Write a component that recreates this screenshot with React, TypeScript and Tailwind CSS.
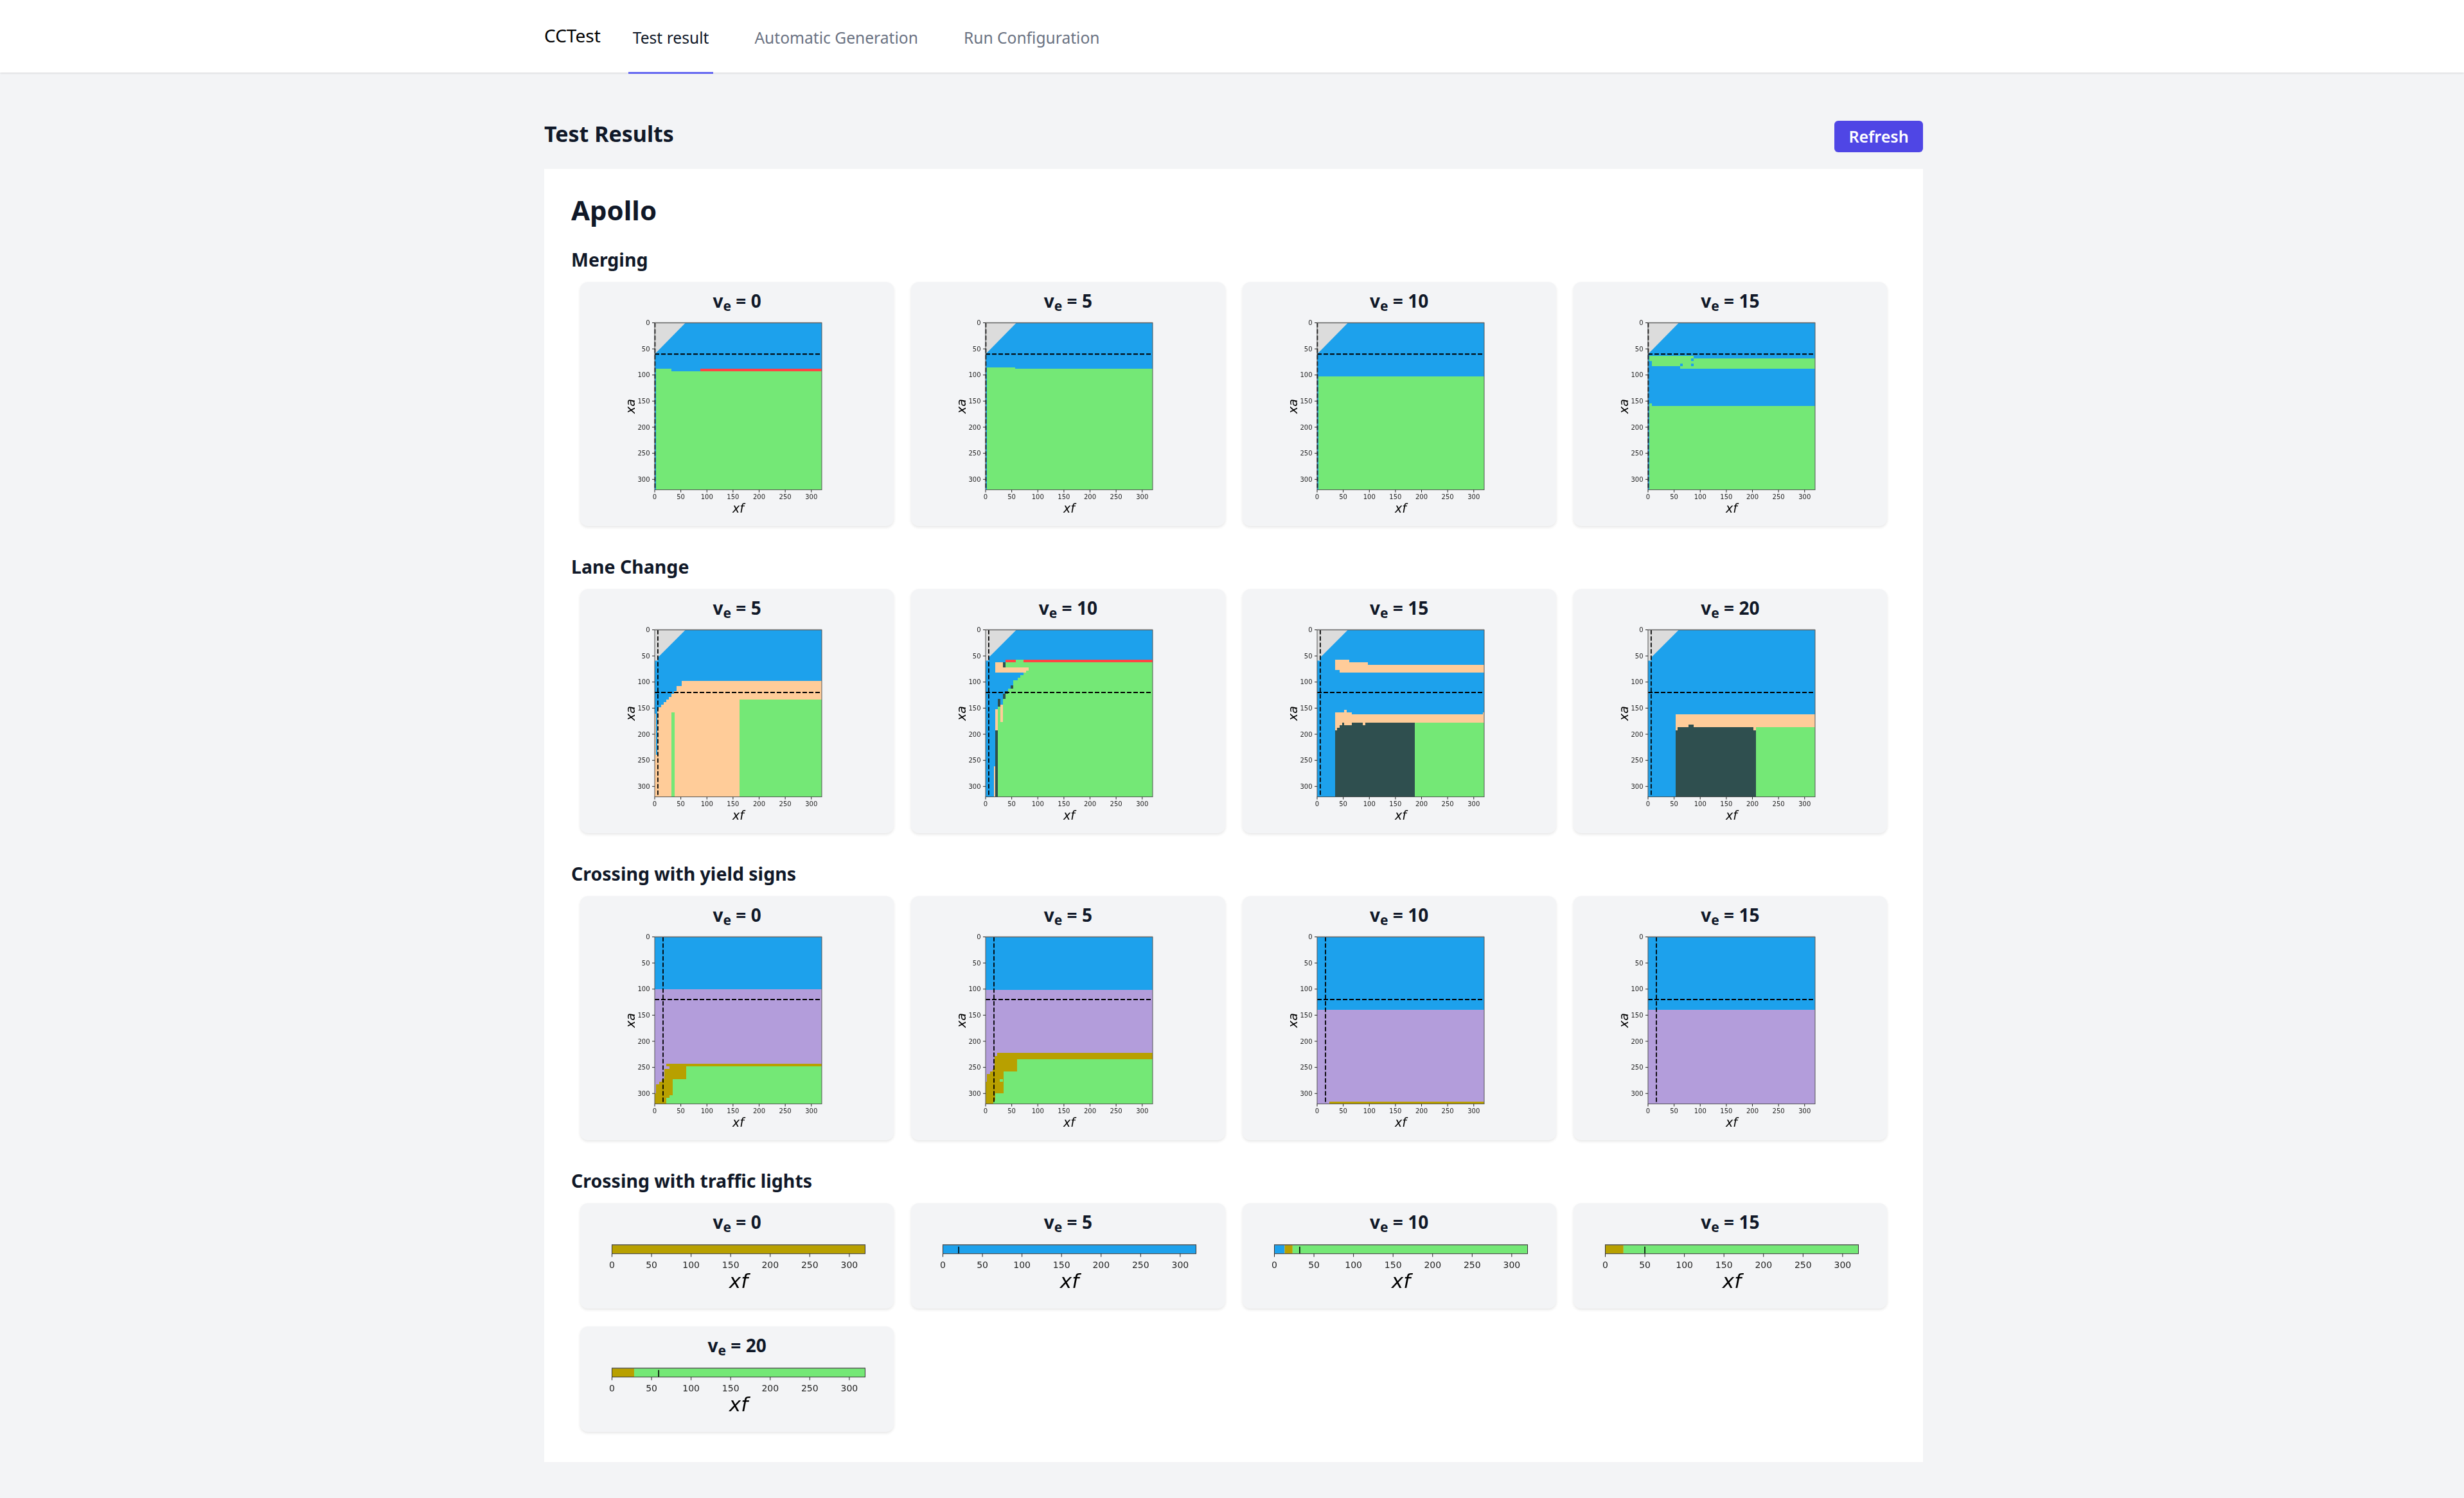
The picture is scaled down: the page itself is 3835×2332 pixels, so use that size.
const B = "#1da1ec";
const G = "#74e876";
const O = "#ffcc99";
const D = "#2f4f4f";
const R = "#ff4444";
const P = "#b39ddb";
const Y = "#b8a000";

// x0, y0, x1, y1, colour, all in data units (0-320)
type Cell = [number, number, number, number, string];
type Plot = { ve: number; cells: Cell[]; gray?: string; vx: number; hy: number };
type Strip = { ve: number; segs: [number, number, string][]; mark?: number };

const GRAY_MERGE = "0,0 59,0 0,60";
const GRAY_LANE = "0,0 59,0 6,53 6,59 0,59";

const merging: Plot[] = [
  {
    ve: 0,
    gray: GRAY_MERGE,
    vx: 0.5,
    hy: 60,
    cells: [
      [2, 88, 32, 320, G],
      [2, 93, 320, 320, G],
      [87, 88, 320, 93, R],
    ],
  },
  {
    ve: 5,
    gray: GRAY_MERGE,
    vx: 0.5,
    hy: 60,
    cells: [
      [2, 85, 57, 320, G],
      [2, 88, 320, 320, G],
    ],
  },
  {
    ve: 10,
    gray: GRAY_MERGE,
    vx: 0.5,
    hy: 60,
    cells: [[2, 103, 320, 320, G]],
  },
  {
    ve: 15,
    gray: GRAY_MERGE,
    vx: 0.5,
    hy: 60,
    cells: [
      [2, 63, 87, 73, G],
      [7, 73, 87, 83, G],
      [87, 68, 320, 88, G],
      [62, 83, 87, 88, G],
      [62, 78, 67, 83, B],
      [83, 68, 87, 73, B],
      [83, 78, 87, 83, B],
      [2, 154, 7, 320, G],
      [7, 159, 320, 320, G],
    ],
  },
];

const laneChange: Plot[] = [
  {
    ve: 5,
    gray: GRAY_LANE,
    vx: 6,
    hy: 120,
    cells: [
      [0, 160, 2, 320, O],
      [2, 239, 5, 320, O],
      [5, 153, 7, 320, O],
      [7, 148, 12, 320, O],
      [12, 143, 17, 320, O],
      [17, 138, 22, 320, O],
      [22, 133, 27, 320, O],
      [27, 128, 32, 320, O],
      [32, 123, 37, 320, O],
      [37, 118, 42, 320, O],
      [42, 108, 52, 320, O],
      [52, 98, 320, 320, O],
      [162, 133, 320, 320, G],
      [32, 158, 38, 320, G],
    ],
  },
  {
    ve: 10,
    gray: GRAY_LANE,
    vx: 6,
    hy: 120,
    cells: [
      [38, 62, 320, 320, G],
      [38, 57, 320, 62, R],
      [58, 57, 72, 62, G],
      [19, 62, 33, 72, O],
      [33, 62, 38, 72, D],
      [19, 72, 83, 78, O],
      [19, 78, 78, 82, O],
      [19, 82, 72, 87, B],
      [19, 87, 67, 92, B],
      [19, 92, 62, 97, B],
      [19, 97, 53, 112, B],
      [48, 107, 53, 112, D],
      [19, 112, 43, 117, B],
      [19, 117, 38, 122, B],
      [37, 117, 43, 122, D],
      [19, 122, 33, 132, B],
      [33, 122, 38, 132, D],
      [19, 132, 33, 320, B],
      [23, 132, 28, 147, D],
      [33, 132, 38, 320, G],
      [23, 147, 33, 320, G],
      [28, 143, 33, 177, O],
      [19, 152, 23, 192, O],
      [19, 192, 23, 320, D],
      [16, 261, 19, 320, O],
    ],
  },
  {
    ve: 15,
    gray: GRAY_LANE,
    vx: 6,
    hy: 120,
    cells: [
      [34, 57, 43, 77, O],
      [43, 57, 62, 82, O],
      [62, 62, 97, 82, O],
      [97, 67, 320, 82, O],
      [34, 158, 67, 200, O],
      [52, 153, 57, 158, O],
      [67, 162, 320, 200, O],
      [318, 158, 320, 162, O],
      [34, 193, 38, 320, D],
      [38, 188, 43, 320, D],
      [43, 183, 48, 320, D],
      [48, 178, 52, 320, D],
      [52, 183, 67, 320, D],
      [67, 178, 87, 320, D],
      [87, 183, 92, 320, D],
      [92, 178, 187, 320, D],
      [187, 178, 320, 320, G],
    ],
  },
  {
    ve: 20,
    gray: GRAY_LANE,
    vx: 6,
    hy: 120,
    cells: [
      [53, 162, 320, 200, O],
      [53, 192, 57, 320, D],
      [57, 187, 77, 320, D],
      [77, 182, 87, 320, D],
      [87, 187, 202, 320, D],
      [202, 192, 207, 320, D],
      [207, 187, 320, 320, G],
    ],
  },
];

const yieldSigns: Plot[] = [
  {
    ve: 0,
    vx: 16,
    hy: 120,
    cells: [
      [0, 100, 320, 320, P],
      [22, 243, 320, 248, Y],
      [28, 248, 320, 253, Y],
      [18, 253, 320, 320, Y],
      [13, 272, 18, 320, Y],
      [8, 277, 13, 320, Y],
      [3, 283, 8, 320, Y],
      [0, 300, 3, 320, Y],
      [60, 248, 320, 320, G],
      [35, 272, 60, 320, G],
      [28, 303, 35, 320, G],
      [22, 308, 28, 320, G],
    ],
  },
  {
    ve: 5,
    vx: 16,
    hy: 120,
    cells: [
      [0, 102, 320, 320, P],
      [22, 222, 320, 320, Y],
      [17, 228, 22, 320, Y],
      [13, 253, 17, 320, Y],
      [8, 258, 13, 320, Y],
      [3, 263, 8, 320, Y],
      [0, 277, 3, 320, Y],
      [60, 235, 320, 320, G],
      [35, 258, 60, 320, G],
      [27, 272, 33, 277, G],
      [18, 300, 35, 320, G],
      [15, 313, 18, 320, G],
    ],
  },
  {
    ve: 10,
    vx: 16,
    hy: 120,
    cells: [
      [0, 140, 320, 320, P],
      [23, 316, 320, 320, Y],
    ],
  },
  {
    ve: 15,
    vx: 16,
    hy: 120,
    cells: [[0, 140, 320, 320, P]],
  },
];

const trafficLights: Strip[] = [
  { ve: 0, segs: [[0, 320, Y]] },
  { ve: 5, segs: [[0, 320, B]], mark: 20 },
  {
    ve: 10,
    segs: [
      [0, 13, B],
      [13, 23, Y],
      [23, 320, G],
    ],
    mark: 32,
  },
  {
    ve: 15,
    segs: [
      [0, 23, Y],
      [23, 320, G],
    ],
    mark: 50,
  },
  {
    ve: 20,
    segs: [
      [0, 28, Y],
      [28, 320, G],
    ],
    mark: 59,
  },
];

const TICKS = [0, 50, 100, 150, 200, 250, 300];
const CHART_FONT = "'DejaVu Sans', sans-serif";
const CARD = "bg-gray-100 rounded-xl shadow-[0_2px_4px_rgba(0,0,0,0.1)]";

function Title({ ve }: { ve: number }) {
  return (
    <h4 className="pt-[7px] h-[53px] text-center text-[28px] leading-[44px] font-bold text-gray-900">
      v<sub>e</sub> = {ve}
    </h4>
  );
}

function PlotCard({ plot }: { plot: Plot }) {
  const px = 116;
  const py = 10.5;
  const k = 0.8125;
  return (
    <div className={CARD}>
      <Title ve={plot.ve} />
      <svg width={488} height={327} className="block blur-[0.4px]">
        <g transform={`translate(${px} ${py}) scale(${k})`} shapeRendering="crispEdges">
          <rect width={320} height={320} fill={B} />
          {plot.gray && <polygon points={plot.gray} fill="#dcdcdc" shapeRendering="auto" />}
          {plot.cells.map((c, i) => (
            <rect key={i} x={c[0]} y={c[1]} width={c[2] - c[0]} height={c[3] - c[1]} fill={c[4]} />
          ))}
        </g>
        <line
          x1={px + plot.vx * k}
          x2={px + plot.vx * k}
          y1={py}
          y2={py + 260}
          stroke="#000"
          strokeWidth={1.8}
          strokeDasharray="7 3"
        />
        <line
          x1={px}
          x2={px + 260}
          y1={py + plot.hy * k}
          y2={py + plot.hy * k}
          stroke="#000"
          strokeWidth={1.8}
          strokeDasharray="7 3"
        />
        <rect x={px} y={py} width={260} height={260} fill="none" stroke="#555" strokeWidth={1} />
        <line x1={px} x2={px + 260} y1={py} y2={py} stroke="#666" strokeWidth={1.6} />
        {TICKS.map((t) => (
          <g key={t} fontFamily={CHART_FONT} fontSize={10} fill="#222">
            <line x1={px + t * k} x2={px + t * k} y1={py + 260} y2={py + 264} stroke="#222" />
            <text x={px + t * k} y={py + 274.5} textAnchor="middle">
              {t}
            </text>
            <line x1={px - 4} x2={px} y1={py + t * k} y2={py + t * k} stroke="#222" />
            <text x={px - 7.5} y={py + t * k + 3.5} textAnchor="end">
              {t}
            </text>
          </g>
        ))}
        <text
          x={px + 130}
          y={py + 295}
          textAnchor="middle"
          fontFamily={CHART_FONT}
          fontStyle="italic"
          fontSize={19}
          fill="#000"
        >
          xf
        </text>
        <text
          transform={`translate(85 ${py + 130}) rotate(-90)`}
          textAnchor="middle"
          fontFamily={CHART_FONT}
          fontStyle="italic"
          fontSize={19}
          fill="#000"
        >
          xa
        </text>
      </svg>
    </div>
  );
}

function StripCard({ strip }: { strip: Strip }) {
  const px = 49.5;
  const py = 11.7;
  const w = 394;
  const h = 14;
  const k = w / 320;
  return (
    <div className={CARD}>
      <Title ve={strip.ve} />
      <svg width={488} height={111} className="block blur-[0.3px]">
        {strip.segs.map((s, i) => (
          <rect key={i} x={px + s[0] * k} y={py} width={(s[1] - s[0]) * k} height={h} fill={s[2]} />
        ))}
        {strip.mark !== undefined && (
          <line
            x1={px + strip.mark * k}
            x2={px + strip.mark * k}
            y1={py + 3}
            y2={py + h}
            stroke="#000"
            strokeWidth={1.6}
          />
        )}
        <rect x={px} y={py} width={w} height={h} fill="none" stroke="#333" strokeWidth={1} />
        <line x1={px} x2={px + w} y1={py} y2={py} stroke="#666" strokeWidth={1.6} />
        {TICKS.map((t) => (
          <g key={t} fontFamily={CHART_FONT} fontSize={14} fill="#222">
            <line x1={px + t * k} x2={px + t * k} y1={py + h} y2={py + h + 5} stroke="#222" />
            <text x={px + t * k} y={py + 36} textAnchor="middle">
              {t}
            </text>
          </g>
        ))}
        <text
          x={px + w / 2}
          y={py + 67}
          textAnchor="middle"
          fontFamily={CHART_FONT}
          fontStyle="italic"
          fontSize={31}
          fill="#000"
        >
          xf
        </text>
      </svg>
    </div>
  );
}

function Section({ title, children }: { title: string; children: React.ReactNode }) {
  return (
    <section className="mb-[43px] last:mb-0">
      <h3 className="text-[28.5px] leading-[40px] font-bold text-gray-900 mb-[15px]">{title}</h3>
      <div className="mx-[14px] grid grid-cols-4 gap-x-[27px] gap-y-[28px]">{children}</div>
    </section>
  );
}

export default function App() {
  return (
    <div className="min-h-screen bg-gray-100 font-['Noto_Sans',sans-serif]">
      <nav className="h-[113px] bg-white shadow-sm">
        <div className="ml-[847px] flex h-[113px] items-stretch">
          <div className="text-[28px] text-black mr-[43px] pt-[35px] leading-[40px]">CCTest</div>
          <div className="flex gap-[57px] text-[24.6px] leading-[36px]">
            <a className="relative px-[7px] pt-[41px] text-gray-900 after:absolute after:left-0 after:right-0 after:top-[112px] after:h-[3px] after:bg-[#6366f1]">
              Test result
            </a>
            <a className="px-[7px] pt-[41px] text-gray-500">Automatic Generation</a>
            <a className="px-[7px] pt-[41px] text-gray-500">Run Configuration</a>
          </div>
        </div>
      </nav>
      <main className="ml-[847px] w-[2146px] pb-[52px]">
        <div className="flex items-center justify-between pt-[75px] mb-[26px]">
          <h2 className="text-[34px] leading-[49px] font-bold text-gray-900 -mt-[8px]">Test Results</h2>
          <button className="h-[49px] w-[138px] rounded-md bg-[#4f46e5] text-[25px] font-semibold text-white">
            Refresh
          </button>
        </div>
        <div className="bg-white px-[42px] pt-[36px] pb-[47px]">
          <h1 className="text-[42px] leading-[56px] font-bold text-gray-900 mb-[29px]">Apollo</h1>
          <Section title="Merging">
            {merging.map((p) => (
              <PlotCard key={p.ve} plot={p} />
            ))}
          </Section>
          <Section title="Lane Change">
            {laneChange.map((p) => (
              <PlotCard key={p.ve} plot={p} />
            ))}
          </Section>
          <Section title="Crossing with yield signs">
            {yieldSigns.map((p) => (
              <PlotCard key={p.ve} plot={p} />
            ))}
          </Section>
          <Section title="Crossing with traffic lights">
            {trafficLights.map((s) => (
              <StripCard key={s.ve} strip={s} />
            ))}
          </Section>
        </div>
      </main>
    </div>
  );
}
